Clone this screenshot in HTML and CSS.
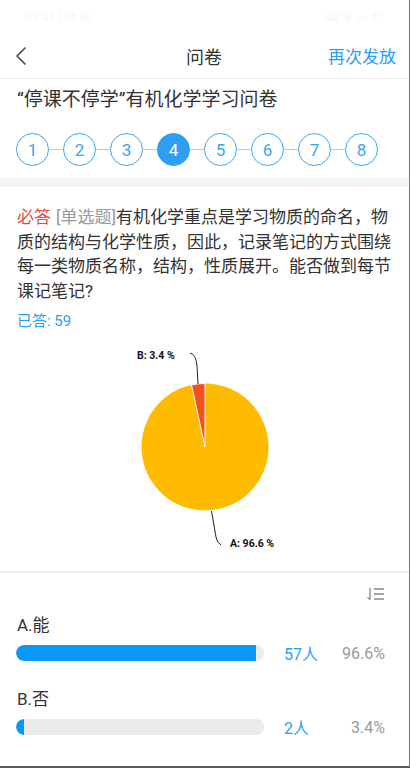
FILE: index.html
```html
<!DOCTYPE html>
<html lang="zh-CN">
<head>
<meta charset="utf-8">
<title>问卷</title>
<link rel="stylesheet" href="styles.css">
</head>
<body>
<div class="page">
  <div class="statusbar">
    <span class="sb-left">09:33 | 85 ⚙</span>
    <span class="sb-right">4G 令 ▭ 97</span>
  </div>
  <header class="navbar">
    <svg class="back" width="14" height="20" viewBox="0 0 14 20"><path d="M11 2 L3 10 L11 18" fill="none" stroke="#444" stroke-width="1.6" stroke-linecap="round" stroke-linejoin="round"/></svg>
    <div class="nav-title">问卷</div>
    <div class="nav-action">再次发放</div>
  </header>

  <div class="survey-title">“停课不停学”有机化学学习问卷</div>

  <div class="steps">
    <span class="step">1</span><span class="link"></span>
    <span class="step">2</span><span class="link"></span>
    <span class="step">3</span><span class="link"></span>
    <span class="step active">4</span><span class="link"></span>
    <span class="step">5</span><span class="link"></span>
    <span class="step">6</span><span class="link"></span>
    <span class="step">7</span><span class="link"></span>
    <span class="step">8</span>
  </div>

  <div class="band"></div>

  <section class="question">
    <p class="q-text"><span class="req">必答</span><span class="qtype">[单选题]</span>有机化学重点是学习物质的命名，物质的结构与化学性质，因此，记录笔记的方式围绕每一类物质名称，结构，性质展开。能否做到每节课记笔记?</p>
    <div class="answered">已答: 59</div>
  </section>

  <div class="chart">
    <svg width="408" height="236" viewBox="0 0 408 236">
      <circle cx="205" cy="114" r="63.5" fill="#ffbb00"/>
      <path d="M205,114 L205,50.5 A63.5,63.5 0 0,0 191.5,51.9 Z" fill="#f4511e" stroke="#fff" stroke-width="1"/>
      <path d="M198,51 L197,33 Q196,21 190,20" fill="none" stroke="#222" stroke-width="1"/>
      <text x="137" y="26" class="pie-label">B: 3.4 %</text>
      <path d="M211.5,178 L216,204 Q217,210 221,212" fill="none" stroke="#222" stroke-width="1"/>
      <text x="230" y="214" class="pie-label">A: 96.6 %</text>
    </svg>
  </div>

  <div class="divider"></div>

  <section class="results">
    <div class="sort-row">
      <svg width="19" height="14" viewBox="0 0 19 14"><path d="M4 1 V12.5 M4 12.5 L1.5 10.5" fill="none" stroke="#888" stroke-width="1.3"/><path d="M8 2 H18 M8 7 H18 M8 12 H18" stroke="#888" stroke-width="1.3"/></svg>
    </div>
    <div class="option">
      <div class="opt-label">A.能</div>
      <div class="opt-row">
        <div class="track"><div class="fill" style="width:96.6%"></div></div>
        <span class="count">57人</span>
        <span class="pct">96.6%</span>
      </div>
    </div>
    <div class="option">
      <div class="opt-label">B.否</div>
      <div class="opt-row">
        <div class="track"><div class="fill" style="width:3.4%"></div></div>
        <span class="count">2人</span>
        <span class="pct">3.4%</span>
      </div>
    </div>
  </section>
</div>
</body>
</html>
```

FILE: styles.css
```css
* { box-sizing: border-box; }
html, body { margin: 0; padding: 0; background: #fff; }
body { font-family: Roboto, "Noto Sans CJK SC", sans-serif; color: #333; }

.page {
  width: 410px;
  height: 768px;
  overflow: hidden;
  border-right: 1px solid #7a7a7a;
  border-bottom: 2px solid #5a5a5a;
  background: #fff;
}

.statusbar {
  height: 33px;
  display: flex;
  justify-content: space-between;
  align-items: center;
  padding: 0 25px;
  font-size: 12px;
  color: #f6f6f6;
}

.navbar {
  height: 46px;
  display: flex;
  align-items: center;
  padding: 0 13px 0 14px;
  border-bottom: 1px solid #ececec;
}
.back { flex: none; }
.nav-title {
  flex: 1;
  text-align: center;
  font-size: 18px;
  color: #333;
  padding-left: 52px;
}
.nav-action {
  font-size: 17px;
  color: #2a9df4;
}

.survey-title {
  padding: 8px 17px 0;
  font-size: 19px;
  line-height: 26px;
  color: #333;
}

.steps {
  display: flex;
  align-items: center;
  padding: 20px 16px 12px;
}
.step {
  flex: none;
  width: 33px;
  height: 33px;
  border: 1.3px solid #3aa5f2;
  border-radius: 50%;
  display: flex;
  align-items: center;
  justify-content: center;
  font-size: 17px;
  color: #3aa5f2;
}
.step.active {
  background: #2c9ff2;
  border-color: #2c9ff2;
  color: #fff;
}
.link {
  flex: none;
  width: 14px;
  height: 1px;
  background: #9fd0f6;
}

.band {
  height: 9px;
  background: #f4f4f4;
}

.question {
  padding: 18px 17px 0;
}
.q-text {
  margin: 0;
  font-size: 17px;
  line-height: 24.5px;
  color: #333;
}
.req {
  display: inline-block;
  color: #e8493f;
  margin-right: 5px;
}
.qtype {
  display: inline-block;
  color: #999;
}
.answered {
  margin-top: 8px;
  font-size: 15px;
  line-height: 20px;
  color: #2a9df4;
}

.chart {
  height: 240px;
  padding-top: 2px;
}
.chart svg { display: block; }
.pie-label {
  font-family: Roboto, sans-serif;
  font-weight: bold;
  font-size: 10.5px;
  fill: #111;
}

.divider {
  height: 2px;
  background: #eeeeee;
}

.results {
  padding: 0 24px 0 16px;
}
.sort-row {
  display: flex;
  justify-content: flex-end;
  padding-top: 14px;
  height: 40px;
}

.opt-label {
  font-size: 17px;
  line-height: 24px;
  color: #333;
  padding-left: 1px;
}
.option + .option .opt-label { margin-top: 22px; }
.opt-row {
  display: grid;
  grid-template-columns: 248px 1fr auto;
  align-items: center;
  margin-top: 4px;
}
.track {
  height: 16px;
  background: #ebebeb;
  border-radius: 8px;
  overflow: hidden;
}
.fill {
  height: 100%;
  background: #0b97f5;
  border-radius: 8px 0 0 8px;
}
.count {
  padding-left: 20px;
  font-size: 16px;
  color: #2a9df4;
}
.pct {
  font-size: 16px;
  color: #999;
}
```
